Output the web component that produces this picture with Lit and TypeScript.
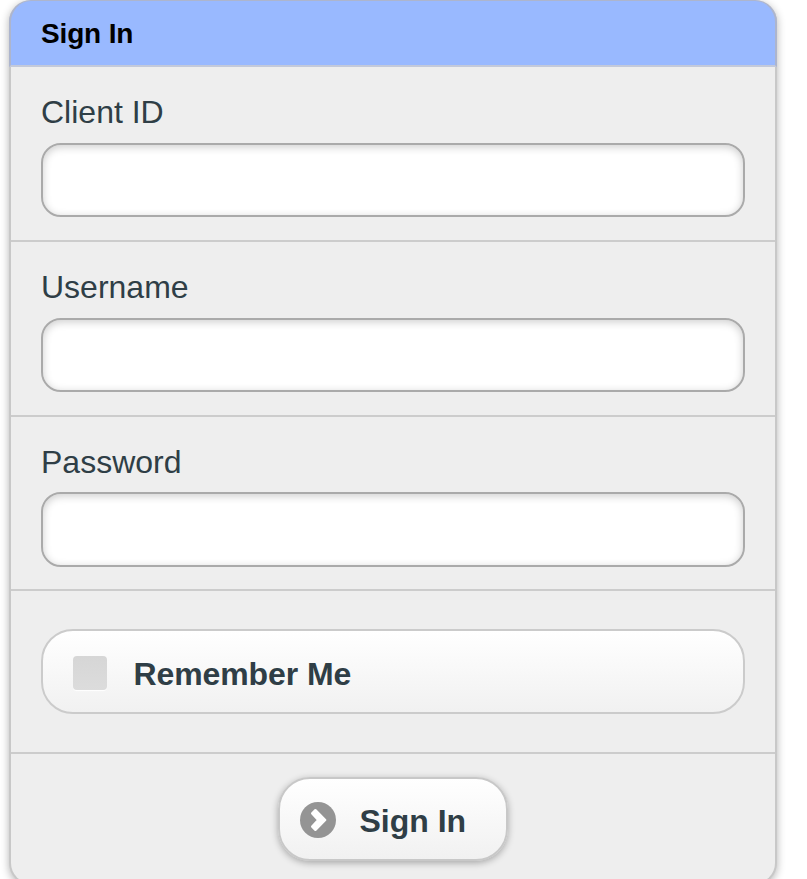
import { LitElement, html, css } from "lit";
import { customElement, state } from "lit/decorators.js";
import { classMap } from "lit/directives/class-map.js";

@customElement("app-root")
export class AppRoot extends LitElement {
  @state() private remember = false;

  static styles = css`
    :host {
      display: block;
      box-sizing: border-box;
      height: 879px;
      padding: 0 30px 0 9px;
      overflow: hidden;
      background: #fff;
      color: #2f3e46;
      font-family: "Liberation Sans", Arial, Helvetica, sans-serif;
      font-size: 32px;
    }
    * {
      box-sizing: border-box;
    }
    .card {
      height: 885px;
      border: 2px solid #c8c8c8;
      border-top: 0;
      border-radius: 22px;
      background: #eee;
      box-shadow: 0 2px 8px rgba(0, 0, 0, 0.3);
    }
    .header {
      height: 67px;
      margin: 0 -2px;
      padding: 0 30px;
      border: 2px solid #adb5cd;
      border-top-width: 1px;
      border-bottom-color: #c3c9da;
      border-radius: 22px 22px 0 0;
      background: #99b9ff;
      color: #000;
      font-size: 28px;
      font-weight: bold;
      letter-spacing: -0.15px;
      line-height: 65px;
    }
    .row {
      height: 175px;
      padding: 27px 30px 0;
      border-bottom: 2px solid #cccccc;
    }
    .row.last {
      height: 174px;
    }
    .row.last .input {
      height: 75px;
      margin-top: 12px;
    }
    .label {
      display: block;
      height: 36px;
      line-height: 36px;
    }
    .input {
      display: block;
      width: 100%;
      height: 74px;
      margin: 13px 0 0;
      padding: 0 16px;
      border: 2px solid #aaa;
      border-radius: 20px;
      outline: none;
      background: #fff;
      box-shadow: inset 0 2px 8px rgba(0, 0, 0, 0.2);
      color: inherit;
      font: inherit;
    }
    .option {
      height: 163px;
      padding: 38px 30px 0;
      border-bottom: 2px solid #cccccc;
    }
    .remember {
      display: flex;
      align-items: center;
      width: 100%;
      height: 85px;
      padding: 2px 30px 0;
      border: 2px solid #cbcbcb;
      border-radius: 32px;
      background: linear-gradient(#fff, #f1f1f1);
      color: inherit;
      font: inherit;
      font-weight: bold;
      letter-spacing: -0.1px;
      line-height: 36px;
    }
    .box {
      width: 34px;
      height: 34px;
      margin: 0 26.5px 0 0;
      border-radius: 4px;
      background: linear-gradient(#d6d6d6, #dcdcdc);
      box-shadow: 0 1px 1px #fff;
    }
    .box.on {
      background: #8a8a8a;
    }
    .caption {
      padding-top: 3px;
    }
    .actions {
      display: flex;
      justify-content: center;
      padding-top: 23px;
    }
    .submit {
      display: flex;
      align-items: center;
      width: 230px;
      height: 84px;
      padding: 1px 0 0 20px;
      border: 2px solid #c8c8c8;
      border-radius: 32px;
      background: linear-gradient(#fff, #f1f1f1);
      box-shadow: 0 2px 7px rgba(0, 0, 0, 0.3);
      color: inherit;
      font: inherit;
      font-weight: bold;
      line-height: 36px;
    }
    .arrow {
      display: block;
      width: 36px;
      height: 36px;
      margin-right: 23.5px;
    }
  `;

  private toggle() {
    this.remember = !this.remember;
  }

  render() {
    return html`
      <div class="card">
        <div class="header">Sign In</div>
        <div class="row">
          <label class="label" for="client">Client ID</label>
          <input class="input" id="client" type="text" />
        </div>
        <div class="row">
          <label class="label" for="user">Username</label>
          <input class="input" id="user" type="text" />
        </div>
        <div class="row last">
          <label class="label" for="pass">Password</label>
          <input class="input" id="pass" type="password" />
        </div>
        <div class="option">
          <button class="remember" @click=${this.toggle}>
            <span class=${classMap({ box: true, on: this.remember })}></span>
            <span class="caption">Remember Me</span>
          </button>
        </div>
        <div class="actions">
          <button class="submit">
            <svg class="arrow" viewBox="0 0 36 36">
              <circle cx="18" cy="18" r="18" fill="#949494" />
              <path
                d="M15.4 8.2 L25.2 18 L15.4 27.8 L12.2 24.6 L18.2 18 L12.2 11.4 Z"
                fill="#fff"
                stroke="#fff"
                stroke-width="2.4"
                stroke-linejoin="round"
              />
            </svg>
            <span class="caption">Sign In</span>
          </button>
        </div>
      </div>
    `;
  }
}
